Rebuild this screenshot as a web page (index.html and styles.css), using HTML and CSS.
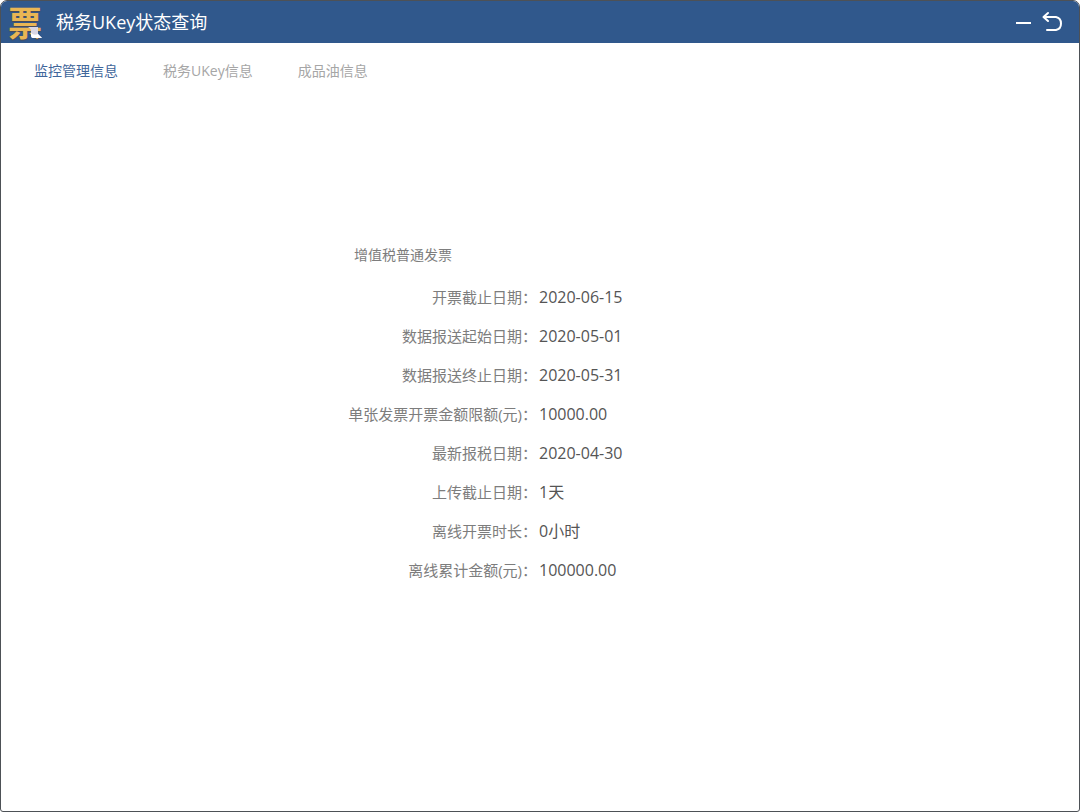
FILE: index.html
```
<!DOCTYPE html>
<html lang="zh-CN">
<head>
    <meta charset="UTF-8">
    <meta name="viewport" content="width=device-width, initial-scale=1.0">
    <title>税务UKey状态查询</title>
    <link rel="stylesheet" href="styles.css">
</head>
<body>
    <div class="window">
        <header class="title-bar">
            <span class="logo" aria-hidden="true">票
                <svg class="logo-paper" width="14" height="12" viewBox="0 0 14 12">
                    <path d="M0 0H10V7L14 11H5Q3 11 3 8V3Q2 1 0 0Z" fill="#d9d6e2"/>
                    <path d="M3 6Q6 9 10 7L14 11H5Q3 11 3 8Z" fill="#ffffff"/>
                </svg>
            </span>
            <h1>税务UKey状态查询</h1>
            <div class="window-actions">
                <button type="button" aria-label="最小化">
                    <svg width="24" height="24" viewBox="0 0 24 24">
                        <path d="M4 13H19" stroke="#fff" stroke-width="2"/>
                    </svg>
                </button>
                <button type="button" aria-label="返回">
                    <svg width="24" height="24" viewBox="0 0 24 24" fill="none" stroke="#fff" stroke-width="2" stroke-linecap="round" stroke-linejoin="round">
                        <path d="M3 7H15Q20 8 20 13.500Q20 19 15 20H6"/>
                        <path d="M7 3L2.500 7L7 11"/>
                    </svg>
                </button>
            </div>
        </header>

        <nav class="tabs">
            <button type="button" class="tab active">监控管理信息</button>
            <button type="button" class="tab">税务UKey信息</button>
            <button type="button" class="tab">成品油信息</button>
        </nav>

        <main class="content">
            <h2>增值税普通发票</h2>
            <dl class="info-list">
                <dt>开票截止日期：</dt>
                <dd>2020-06-15</dd>
                <dt>数据报送起始日期：</dt>
                <dd>2020-05-01</dd>
                <dt>数据报送终止日期：</dt>
                <dd>2020-05-31</dd>
                <dt>单张发票开票金额限额(元)：</dt>
                <dd>10000.00</dd>
                <dt>最新报税日期：</dt>
                <dd>2020-04-30</dd>
                <dt>上传截止日期：</dt>
                <dd>1天</dd>
                <dt>离线开票时长：</dt>
                <dd>0小时</dd>
                <dt>离线累计金额(元)：</dt>
                <dd>100000.00</dd>
            </dl>
        </main>
    </div>
</body>
</html>
```
FILE: styles.css
```
* {
    box-sizing: border-box;
}

body {
    margin: 0;
    background: #fff;
    font-family: "Open Sans", "Noto Sans CJK SC", sans-serif;
    color: #555;
}

h1,
h2,
dl,
dd {
    margin: 0;
    font-weight: normal;
}

button {
    padding: 0;
    border: none;
    background: none;
    font-family: inherit;
    cursor: pointer;
}

.window {
    min-height: 100vh;
    border: 1px solid #4d5156;
    border-radius: 7px 7px 3px 3px;
}

/* 标题栏 */
.title-bar {
    display: flex;
    align-items: center;
    height: 42px;
    padding: 0 14px 0 7px;
    border-radius: 6px 6px 0 0;
    background: #30588c;
    color: #fff;
}

.logo {
    position: relative;
    width: 34px;
    height: 34px;
    margin-right: 14px;
    font-family: "Noto Sans CJK SC", sans-serif;
    font-size: 34px;
    font-weight: bold;
    line-height: 34px;
    color: #e9b654;
    text-shadow: 0 1px 1px #4a4a55;
}

.logo-paper {
    position: absolute;
    right: 0;
    bottom: 0;
}

.title-bar h1 {
    font-size: 18px;
    line-height: 24px;
}

.window-actions {
    display: flex;
    gap: 5px;
    margin-left: auto;
}

.window-actions button {
    width: 24px;
    height: 24px;
}

.window-actions svg {
    display: block;
}

/* 选项卡 */
.tabs {
    display: flex;
    gap: 45px;
    padding: 16px 33px;
}

.tab {
    font-size: 14px;
    line-height: 24px;
    color: #a6a6a6;
}

.tab.active {
    color: #3f669b;
}

/* 状态信息 */
.content {
    padding-top: 144px;
}

.content h2 {
    width: 50%;
    padding-right: 88px;
    font-size: 14px;
    line-height: 24px;
    color: #7d7d7d;
    text-align: right;
}

.info-list {
    display: grid;
    grid-template-columns: 1fr 1fr;
    row-gap: 15px;
    padding-top: 18px;
    padding-right: 2px;
    line-height: 24px;
}

.info-list dt {
    padding-right: 2px;
    font-size: 15px;
    color: #7d7d7d;
    text-align: right;
}

.info-list dd {
    font-size: 16px;
    color: #555;
}
```
